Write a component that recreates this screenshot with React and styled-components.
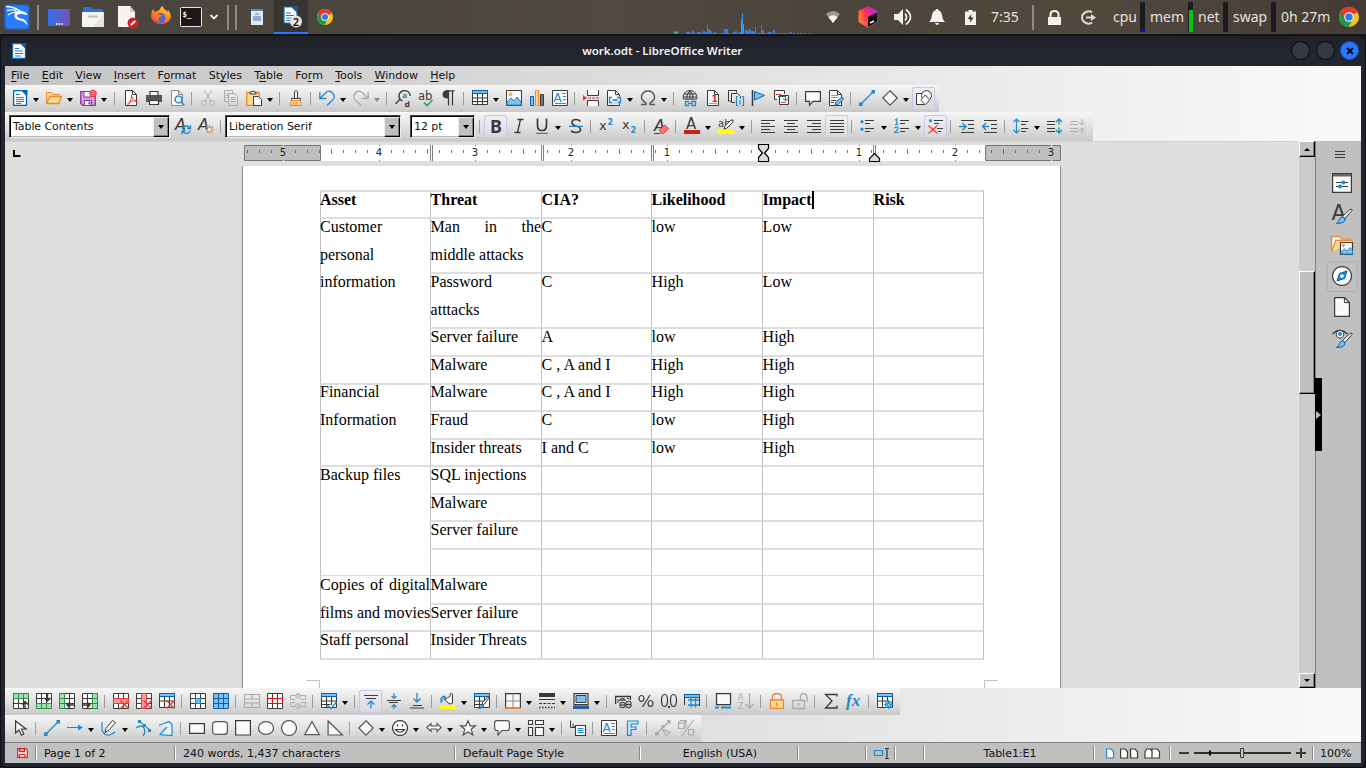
import React from "react";
import styled, { createGlobalStyle } from "styled-components";

const Global = createGlobalStyle`
  * { box-sizing: border-box; }
  body { margin: 0; background: #15171d; overflow: hidden; }
  svg { display: block; flex: none; overflow: visible; }
`;

/* ---------- palette ---------- */
const K = "#3a3a38";
const B = "#1e8bcd";
const DB = "#0063b1";
const LB = "#83beec";
const R = "#ed3d3b";
const O = "#ed8733";
const Y = "#f8db8f";
const G = "#309048";
const LG = "#a1dfb3";
const X = "#acacac";
const W = "#fafafa";
const SANS = '"DejaVu Sans", sans-serif';

/* ---------- icon data: [path, stroke, fill, width, dash] or {t,...} for letters ---------- */
const grid = (c, f) => ["M.5 .5h15v15h-15zM.5 5.5h15M.5 10.5h15M5.5 .5v15M10.5 .5v15", c, f];
const redX = ["M7.5 7.5l8 8M15.5 7.5l-8 8", R, "none", 1.5];
const tableTop = [["M.5 .5h15v14h-15z", K, W], ["M0 0h16v4h-16z", "none", DB], ["M1 1h14v2h-14z", "none", LB]];

const ICONS = {
  newDoc: [["M1.6 .6h8.400l4.500 4.500v10.300H1.600z", DB, W, 1.300], ["M10 0h5.500v5.500z", "none", DB], ["M4 4.500h4M4 7.500h8M4 9.500h8M4 11.500h8M4 13.500h5", B]],
  open: [["M.6 13.500V2.500h5l1.500 2h6v3", O, Y], ["M.8 13.500l3-7h11.700l-2.500 7z", O, Y, 1.300]],
  save: [["M.7 1.700h14.600v13.600h-12.600l-2-2z", "#8e3a96", "#d59bd9", 1.300], ["M4 2v5h7V2M4.500 15v-4.500h7V15", "#8e3a96", W], ["M8.500 11.500h2v3h-2z", "none", "#8e3a96"], ["M13 0a3.300 3.300 0 1 0 .01 0z", "#e33", "#f66"]],
  pdf: [["M2.500 .5h7l4 4v11h-11z", K, W], ["M9.500 .5v4h4", K], ["M8.500 5q1 3-2 8-2 3-2 1 3-4 9-3 2 1 0 1-4-2-5-6", R, "none", 1]],
  print: [["M4 5V1.500h8V5", K, W, 1.200], ["M0 5h16v7h-3v-2H3v2H0z", "none", "#555553"], ["M3.500 10.500h9v4h-9z", K, W, 1.200]],
  preview: [["M2.500 .5h7l4 4v11h-11z", "#8a8a88", W], ["M9.500 .5v4h4", "#8a8a88"], ["M9.500 6a3.500 3.500 0 1 0 .01 0zM12 12l3.500 3.500", B, "#e8f4fd", 1.400]],
  cut: [["M4.500 .5l6.500 11M11.500 .5L5 11.500M4 10.500a2.500 2.500 0 1 0 .01 0zM12 10.500a2.500 2.500 0 1 0 .01 0z", X]],
  copy: [["M9.500 3V.5h-8v11h3M5.500 3.500h6l3 3v9h-9zM7.500 7.500h5M7.500 9.500h5M7.500 11.500h5", X, "none"], ["M3 3.500h2.500M3 5.500h2M3 7.500h2", X]],
  paste: [["M.7 2.500h12.500v12.800H.7z", O, Y, 1.300], ["M4 4V2h2Q7-.5 8 2h2v2z", K, W], ["M7.500 6.500h5l3 3v6h-8z", K, W]],
  brushFmt: [["M6.500 8V1.500q1.500-2 3 0V8", K, W], ["M3.500 8.500h9v2h-9z", K, W], ["M3.500 10.500l-1.500 5h11.500l-1-5z", O, Y], ["M5 15l1-3M8 15l.5-3", O]],
  undo: [["M.8 2v6.500h6.500M.8 8.500L7 2.500q4-3 7 1 3 4-1 7L8 15.500", B, "none", 1.300]],
  redo: [["M15.200 2v6.500H8.700M15.200 8.500L9 2.500q-4-3-7 1-3 4 1 7L8 15.500", X, "none", 1.300]],
  find: [["M9.500 .6a5.500 5.500 0 0 0-4.500 8.700L.5 14M5 9.300q1 1 2.500 1.500M15 6V4.500Q13.500 .6 9.500 .6", K, "none", 1.300], { t: "a", x: 7, y: 8, s: 7.5, c: B, f: SANS, b: 1 }, { t: "d", x: 9.5, y: 16.8, s: 7.5, c: K, f: SANS, b: 1 }],
  spell: [{ t: "ab", x: 0, y: 10, s: 11.5, c: K, f: SANS }, ["M6 12.500l3 3 5.500-5.500", "#27a35a", "none", 1.600]],
  pilcrow: [["M7.500 15.500V.8h6M11.500 .8v14.700", K, "none", 1.300], ["M8 0H6Q1.500 .5 1.500 4.500T7 8.500z", "none", K]],
  table: [...tableTop, ["M.5 8h15M.5 11.500h15M5.500 4v11M10.500 4v11", K]],
  image: [["M.5 .5h15v15H.5z", K, W], ["M1 12l4-4 3 3 3-4 4 5v3H1z", B, LB], ["M4.500 3a1.500 1.500 0 1 0 .01 0z", O, Y]],
  chart: [["M1.500 6.500h3v9h-3z", DB, LB], ["M6.500 .6h3v15h-3z", O, Y], ["M11.500 4.500h3v11h-3z", K, "#777"]],
  textbox: [["M.5 .5h15v15H.5z", K, W], { t: "A", x: 1.5, y: 12, s: 12, c: B, f: SANS }, ["M10 3.500h4M11 6.500h3M11 9.500h3M3 13.500h11", "#777"]],
  pagebreak: [["M4.500 0v5.500h11V0M4.500 16v-5.500h11V16", K, W], ["M5 8h11", R, "none", 1, "3 1"], ["M0 5l4 3-4 3z", "none", R]],
  field: [["M1.500 15.500V.5h8l4 4v2M1.500 15.500h12v-2", K, W], ["M9.500 .6v4h4", K], ["M6 7.500H3.500v5H6M11 7.500h3.500v5H12M6.500 10h5", B, "none", 1.300]],
  omega: [["M1 14.500h5v-1.500Q.8 10 1.500 6 3 1 8 1t6.500 5q.7 4-4.500 7v1.500h5", "#555", "none", 1.400]],
  link: [["M8 .6a6.500 6.500 0 0 0-6.500 8.500h13A6.500 6.500 0 0 0 8 .6zM8 .6v8.500M2 4h12M1.500 7h13M5 9Q4 4 8 .6 12 4 11 9", K], ["M7 11.500H3.500v4H7M9 11.500h4.500v4H9M6 13.500h5", B, "none", 1.300]],
  footnote: [["M2.500 .5h7l4 4v11h-11z", K, W], ["M9.500 .5v4h4", K], { t: "1", x: 6.5, y: 12, s: 9, c: "#e22", f: SANS, b: 1 }, ["M4 13.500h8", "#999"]],
  crossref: [["M3 11H.5V.5h8v2M3.500 3.500h6l3 3v2M3.500 3.500v9H7", K, "none"], ["M10 6.500H8.500v9H10M14 6.500h1.500v9H14M12 10v4.500", B, "none", 1.200], ["M12 7.500v1.200", B]],
  bookmark: [["M1.500 0v16", K, "none", 1.500], ["M3.500 1.500l10 4-10 4.500z", DB, LB]],
  xref: [["M10.500 4V.5h-10v9H3M5.500 5.500h9v9h-9z", K, W], ["M2 4.500h5M7 12.500h5", R], ["M4 6.500h7.500v4M9 8.500l2.500 2.500L14 8.500", "#2b6b45"]],
  comment: [["M.6 1.600h14.800v9.800H8L4.500 15.300v-3.900H.6z", K, W, 1.200]],
  track: [["M1.500 .5h8l4 4v11h-12z", K, W], ["M9.500 .5v4h4", K], ["M3 5.500h7M3 7.500h7", O], ["M3 10.500h5M3 12.500h3", K], ["M7 15l1-3 6-5 1.500 2-6 6z", DB, LB]],
  line: [["M2 14L14 2", B, "none", 1.200], ["M0 12.500h3.500V16H0zM12.500 0H16v3.500h-3.500z", "none", B]],
  diamond: [["M8 .8L15.200 8 8 15.200.8 8z", "#5a5a58", W, 1.300]],
  shapes: [["M8.500 3.500h-8v11h8z", K, W], ["M10.500 .6a5 5 0 1 0 .01 0z", K, W], ["M9 5L14 10l-5 5-4-5z", "#777", W, 1.100]],
  aRefresh: [{ t: "A", x: 0, y: 12, s: 16, c: K, f: SANS, i: 1 }, ["M7.500 11Q8 8 11 8q2.500 0 3.500 2M15.500 7v3.500h-3.500M15.500 12.500Q14 15.500 11.500 15.500T8 13.500M7 16.500V13h3.500", B, "none", 1.300]],
  aNew: [{ t: "A", x: 0, y: 12, s: 16, c: K, f: SANS, i: 1 }, ["M11.500 7v9M7 11.500h9M8.300 8.300l6.400 6.400M14.700 8.300l-6.400 6.400", O, "none", 1.200], ["M11.500 9.500a2 2 0 1 0 .01 0z", O, "#fff"]],
  bold: [{ t: "B", x: 2, y: 15, s: 18, c: K, f: '"Noto Sans", sans-serif', b: 1 }],
  italic: [["M6.500 1.500h6M3.500 14.500h6M9.500 1.500l-3 13", K, "none", 1.300]],
  underline: [["M3.500 .5v7q0 5 4.500 5t4.500-5v-7", K, "none", 1.700], ["M2 15.400h12", B, "none", 1.200]],
  strike: [["M12.500 3.500Q11 1.500 8 1.500 4 1.500 4 4.500q0 2.500 4 3.500 4.500 1 4.500 3.500 0 3-4.500 3-3 0-5-1.500", K, "none", 1.600], ["M1 8.300h14", B, "none", 1.300]],
  sup: [{ t: "x", x: 0, y: 12, s: 13, c: K, f: SANS }, { t: "2", x: 8.5, y: 7, s: 8, c: B, f: SANS, b: 1 }],
  sub: [{ t: "x", x: 0, y: 11, s: 13, c: K, f: SANS }, { t: "2", x: 8.5, y: 15, s: 8, c: B, f: SANS, b: 1 }],
  erase: [{ t: "A", x: 1, y: 13, s: 16, c: K, f: SANS, i: 1 }, ["M6.500 12l5-5 4 3.500-5 5h-2z", "#d33", "#f77"], ["M1 15.500h6", K]],
  fontColor: [{ t: "A", x: 2, y: 11, s: 15, c: K, f: SANS, b: 0 }, ["M0 12h16v4H0z", "none", "#c9211e"]],
  highlight: [{ t: "ab", x: 0, y: 9, s: 10, c: K, f: SANS }, ["M7 8l6-6q3-1 2 2l-6 6-3 1z", K, W], ["M0 12h16v4H0z", "none", "#ffff00"]],
  alignL: [["M1 2.500h14M1 5.500h9M1 8.500h14M1 11.500h9M1 14.500h14", K]],
  alignC: [["M1 2.500h14M4 5.500h8M1 8.500h14M4 11.500h8M1 14.500h14", K]],
  alignR: [["M1 2.500h14M6 5.500h9M1 8.500h14M6 11.500h9M1 14.500h14", K]],
  alignJ: [["M1 2.500h14M1 5.500h14M1 8.500h14M1 11.500h14M1 14.500h14", K]],
  bullets: [["M2 2.500a1.200 1.200 0 1 0 .01 0zM2 10a1.200 1.200 0 1 0 .01 0z", B, B], ["M5 2.500h9M5 5.500h5M5 10.500h9M5 13.500h5", K]],
  numbers: [["M1 2.200L2.800 1v5.500M1 6.500h3.600M.8 10Q2.500 8 4 9.800 4.500 11 .8 14.500h4", B, "none", 1.200], ["M6 2.500h9M6 5.500h5M6 10.500h9M6 13.500h5", K]],
  noList: [["M2.500 1.500a1.200 1.200 0 1 0 .01 0z", B, B], ["M6 2.500h9M6 5.500h5M9 10.500h6M10 13.500h3", K], ["M.5 7.500l9 8M9.500 7.500l-9 8", R, "none", 1.300]],
  indent: [["M2 2.500h13M9 6.500h6M9 10.500h6M2 14.500h13", K], ["M0 8.500h6.500M3.500 5l3.500 3.500L3.500 12", B, "none", 1.300]],
  outdent: [["M2 2.500h13M9 6.500h6M9 10.500h6M2 14.500h13", K], ["M7 8.500H.8M4 5L.5 8.500 4 12", B, "none", 1.300]],
  spacing: [["M8 3.500h7.500M8 6.500h5M8 10.500h7.500M8 13.500h5", K], ["M3.500 1v14M.5 4l3-3 3 3M.5 12l3 3 3-3", B, "none", 1.200]],
  paraInc: [["M0 3.500h8M0 6.500h8M0 10.500h8M0 13.500h8", K], ["M12 1v5.500M9 4l3-3 3 3M12 9.500v5.500M9 12l3 3 3-3", B, "none", 1.300]],
  paraDec: [["M0 3.500h8M0 6.500h8M0 10.500h8M0 13.500h8M12 1v5.500M9 4l3 3 3-3M12 15.500V10M9 13l3-3 3 3", X]],
  rowAbove: [grid(K, W), ["M.5 .5h15v5H.5zM5.500 .5v5M10.500 .5v5", G, LG], ["M12 16V8.500M9 11.500l3-3 3 3", K, "none", 1.400]],
  rowBelow: [grid(K, W), ["M.5 10.500h15v5H.5zM5.500 10.500v5M10.500 10.500v5", G, LG], ["M11.500 0v8M8.500 5l3 3 3-3", K, "none", 1.400]],
  colLeft: [grid(K, W), ["M.5 .5h5v15h-5zM.5 5.500h5M.5 10.500h5", G, LG], ["M16 12H8M11 9l-3 3 3 3", K, "none", 1.400]],
  colRight: [grid(K, W), ["M10.500 .5h5v15h-5zM10.500 5.500h5M10.500 10.500h5", G, LG], ["M0 12h8M5 9l3 3-3 3", K, "none", 1.400]],
  delRow: [grid(K, W), ["M.5 5.500h15v5H.5z", R, "#f99"], redX],
  delCol: [grid(K, W), ["M5.500 .5h5v15h-5z", R, "#f99"], redX],
  delTable: [...tableTop, ["M.5 8h15M5.500 4v10M10.500 4v10", K], redX],
  selCell: [grid(K, W), ["M5.500 5.500h5v5h-5z", B, "#6db8ea"]],
  selTable: [grid(DB, LB)],
  merge: [["M.5 1.500h15v13H.5zM.5 6h15M.5 10h15M8 1.500V6M8 10v4.500", X, "none", 1.200]],
  split: [["M.5 .5h15v15H.5zM5.500 .5v15M10.500 .5v15", K, W], ["M.5 5.500h15v5H.5zM5.500 5.500v5M10.500 5.500v5", "#d11", W, 1.200]],
  splitTable: [["M6 5.500V2.500H.5v4H5M10 5.500V2.500h5.500v4H11M6 10.500v3H.5v-4H5M10 10.500v3h5.500v-4H11M8 0v6M6 2l2-2 2 2M8 16v-6M6 14l2 2 2-2", X]],
  autofmt: [...tableTop, ["M.5 8h15M.5 11.500h9M5.500 4v11M10.500 4v8", K], ["M6 12l4 3.500L15.500 9", B, "none", 1.400]],
  vTop: [["M1 2.500h14M3 5.500h10", K], ["M8 15.500V8M4.500 11.500L8 8l3.500 3.500", B, "none", 1.300]],
  vMid: [["M1 7.500h14M3 9.500h9", K], ["M8 0v5.500M5.500 3L8 5.500 10.500 3M8 16v-4.500M5.500 14L8 11.500l2.500 2.500", B, "none", 1.200]],
  vBot: [["M4 12.500h9M1 15h14", K], ["M8 0v9M4.500 5.500L8 9l3.500-3.500", B, "none", 1.300]],
  cellBg: [["M1 10V5q2-2 4-2v4", DB, LB], ["M8 10L5 6l5-2.500V1q1.500-1.500 2.500 0v9L10 11z", K, W], ["M0 12h16v4H0z", "none", "#ffff00"]],
  tblStyle: [...tableTop, ["M.5 8h9M.5 11.500h8M5.500 4v11M10.500 4v4", K], ["M15.500 4l-5 7-2 1 0-2.500 5-5.500q2-1 2 0z", K, W], ["M8 11l2 1q-1 3.500-5 3.500 2-1.500 3-4.500z", DB, LB]],
  borders: [["M.6 .6h14.800v14.400H.6z", K, W, 1.200], ["M8 1v14M1 8h14", "#888"], ["M0 15.200h16", O, "none", 1.600]],
  lineStyle: [["M0 2h16", K, "none", 4], ["M0 6.500h16", K, "none", 1], ["M0 10.500h16", K, "none", 1, "3 1.300"], ["M0 14.500h16", K, "none", 1.300, "1.500 1.500"]],
  borderCol: [["M1 .6h14v11H1z", K, W, 1.200], ["M3 2.500h10v7H3z", K, "#83beec"], ["M0 12.500h16V16H0z", "none", "#2a6099"]],
  currency: [["M.6 11V3.500h14.800V7", K, "none", 1.300], ["M3 6v4M12 5.500h2M4.500 8a3 2.500 0 0 1 6 0", K, "#777"], ["M5 10q2.500-2 5 0v4q-2.500 2-5 0zM11 9q2.500-2 5 0v5q-2.500 2-5 0z", K, "#bbb"], ["M5 12h5M11 11.500h5", K]],
  percent: [["M3.500 2.500a2.500 3 0 1 0 .01 0zM12.500 7.500a2.500 3 0 1 0 .01 0zM12 2L4.500 14", K, "none", 1.200]],
  decimal: [["M3.500 1.500q3 0 3 6t-3 6-3-6 3-6zM12.500 1.500q3 0 3 6t-3 6-3-6 3-6z", K, "none", 1.200], ["M7 13h2v2H7z", "none", K]],
  numFmt: [["M0 1h16v4H0z", "none", DB], ["M1 2h14v2H1z", "none", LB], ["M.5 5v7M15.500 5v8", K, W], ["M7 3.500v11M11.500 3.500v11M4 7h11M4 12h11", B, "none", 1.300]],
  caption: [["M1.500 .6h14v11h-14z", K, W, 1.300], ["M0 14.500h4M6 14.500h10", B, "none", 1.800]],
  sort: [{ t: "A", x: 0, y: 7, s: 8, c: X, f: SANS }, { t: "Z", x: 0, y: 16, s: 8, c: X, f: SANS }, ["M11.500 0v15M7.500 11l4 4 4-4", X, "none", 1.300]],
  lock: [["M3.500 7V4q0-3.500 4.500-3.500T12.500 4v3", O, "none", 1.400], ["M1.500 7h13v8.400h-13z", O, Y, 1.300], ["M8 9.500v4", O, "none", 1.500]],
  unlock: [["M8.500 7V4q0-3.500 3-3.500t3.500 3.500v5M.6 7.500h11.800v8H.6zM6.500 10v3", X, "none", 1.300]],
  sum: [["M14 3.500V1.500H2.500L9 8l-6.500 7H14v-2.500", K, "none", 1.300]],
  fx: [{ t: "fx", x: 0, y: 12.5, s: 17, c: B, f: '"Liberation Serif", serif', i: 1, b: 1 }],
  tblProps: [...tableTop, ["M.5 8h9M5.500 4v11M10.500 4v4", K], ["M11.500 8.500a3 3 0 1 0 .01 0z", B, W, 1.300], ["M11.500 7v9M7 11.500h9M8.300 8.300l6.400 6.400M14.700 8.300l-6.400 6.400", B], ["M11.500 10.500a1.200 1.200 0 1 0 .01 0z", B, "#fff"]],
  pointer: [["M2.600 1v12l3.400-3 2.500 5.200 2.300-1.200L8.500 9H13z", K, W, 1.200]],
  lineArrow: [["M0 7.500h12", B, "none", 1.200], ["M11 4.500l5 3-5 3z", "none", B]],
  curve: [["M1 2v3.500q0 2.500 0 4T4 14.500q3 1.500 6 0t4-2.500", B, "none", 1.200], ["M11.500 .5l3 2-7 8-3.500 2 1-4z", K, W]],
  connector: [["M1 8q6-4 8 0t-1 8", B, "none", 1.300], ["M4 1l12 10", K], ["M3 0h3v3H3zM8 4h3v3H8zM13 9h3v3h-3z", "none", B]],
  polygon: [["M1 5.500l10-4 3 3v11l-12-1 7-7.500", B, "#e7f1fa", 1.200]],
  rect: [["M.6 3.600h14.800v9.800H.6z", K, W, 1.200]],
  rrect: [["M3.600 1.600h8.800q3 0 3 3v6.800q0 3-3 3H3.600q-3 0-3-3V4.600q0-3 3-3z", "#555", W, 1.200]],
  square: [["M.6 .6h14.800v14.400H.6z", K, W, 1.200]],
  ellipse: [["M8 1.600c10 0 10 12.800 0 12.800s-10-12.800 0-12.800z", "#555", W, 1.200]],
  circle: [["M8 .6a7.400 7.400 0 1 0 .01 0z", "#555", W, 1.200]],
  tri: [["M8 1.500l7.300 13.200H.7z", "#555", W, 1.200]],
  rtri: [["M1.100 1v14h14.300z", "#555", W, 1.200]],
  smiley: [["M8 .6a7.400 7.400 0 1 0 .01 0z", K, W, 1.200], ["M5.500 4.500v2M10.500 4.500v2M3.500 9.500q4.500 5.500 9 0z", K, "none", 1.200]],
  dblArrow: [["M.8 7.500L5 3.500V6h6V3.500l4.200 4-4.200 4V9H5v2.500z", "#555", W, 1.100]],
  star: [["M8 .8l2.100 5h5.300l-4.200 3.400 1.600 5.800L8 11.700 3.200 15l1.600-5.800L.6 5.800h5.300z", "#555", W, 1.200]],
  callout: [["M3 .6h10q2.400 0 2.400 2.400v5q0 2.500-2.400 2.500H8L4 15v-4.500H3Q.6 10.500 .6 8V3Q.6 .6 3 .6z", "#555", W, 1.200]],
  flow: [["M.5 .5h4v4h-4zM7.500 .5h8v4h-8zM.5 7.500h4v8h-4zM7.500 7.500h8v8h-8z", K, W, 1.100]],
  insText: [["M.5 .5v7h4.500M3 3.500v3.500h2", K], ["M5.500 5.500h10v10h-10z", K, W, 1.100], ["M7.500 8.500h6M7.500 10.500h6M7.500 12.500h6", B]],
  fontwork: [["M3.500 15.300V1h10.500v3H7v3h5v2.500H7v5.800z", B, "#cfe7f8", 1.200]],
  points: [["M2 13.500L8 7l6-5M7 9l8 3.500-4 3z", X, "none", 1.200], ["M0 12h4v3.500H0zM12 0h3.500v3.500H12zM6.500 5h3v3h-3z", "none", X]],
  extrude: [["M.6 3h5.500v5.500H.6zM.6 3l2-2.400h5.500v5.400l-2 2.500M6 3l2-2.400M15.500 0L4 15.500M10.500 9.500h5v5.500h-5z", X, "none", 1.200]],
  // sidebar, drawn on a 20 unit box
  sbProps: [["M.6 .6h18.800v18.800H.6z", K, W, 1.200], ["M1 1h18v2.500H1z", "none", "#666664"], ["M4 9.500h12M4 13.500h12", K, "none", 1.100], ["M11.500 7.500a2 2 0 1 0 .01 0zM8 11.500a2 2 0 1 0 .01 0z", "none", B]],
  sbStyles: [{ t: "A", x: -.5, y: 16, s: 21, c: K, f: SANS }, ["M20 6.500l-7 8-2.500-2 7.500-7q3-1 2 1z", K, W], ["M10.500 13q3 1 2.500 3-1.500 4-8.500 3.300 3-1 3-4 1-2 3-2.300z", DB, LB]],
  sbGallery: [["M-.4 16V1.600h8l2 2.500h8v3", O, W, 1.300], ["M-.4 17.400l4-12h17.500", O, Y, 1.300], ["M8.500 7.500h12v12h-12z", K, W, 1.200], ["M9 17l3.500-3 2.500 2 3-3.500 2.500 3v3.500H9z", B, LB], ["M11.500 9.500a1 1 0 1 0 .01 0z", O, O]],
  sbNav: [["M10 .6a9.400 9.400 0 1 0 .01 0z", K, W, 1.200], ["M15 5l-2.500 7.500L5 15l2.500-7.500z", DB, B], ["M10 8.200a1.800 1.800 0 1 0 .01 0z", "none", "#fff"]],
  sbPage: [["M2.600 .6h9.800l5 5v13.800H2.600z", K, W, 1.200], ["M12.400 .6v5h5", K]],
  sbInspect: [["M.5 6q7-7 15 0", K, "none", 1.200], ["M8 2.500a3.800 3.800 0 1 0 .01 0z", K, W], ["M8 4a2 2 0 1 0 .01 0z", "none", B], ["M20 6.500l-7 8-2.500-2 7.500-7q3-1 2 1z", K, W], ["M10.500 13q3 1 2.500 3-1.500 4-8.500 3.300 3-1 3-4 1-2 3-2.300z", DB, LB]],
};

const Icon = ({ name, size = 16, box = 16 }) => (
  <svg width={size} height={size} viewBox={`0 0 ${box} ${box}`}>
    {ICONS[name].map((p, i) =>
      Array.isArray(p) ? (
        <path key={i} d={p[0]} stroke={p[1]} fill={p[2] || "none"} strokeWidth={p[3] || 1} strokeDasharray={p[4]} />
      ) : (
        <text key={i} x={p.x} y={p.y} fontSize={p.s} fill={p.c} fontFamily={p.f} fontWeight={p.b ? 700 : 400} fontStyle={p.i ? "italic" : "normal"}>{p.t}</text>
      )
    )}
  </svg>
);

/* ---------- desktop panel ---------- */
const Screen = styled.div`
  width: 1366px; height: 768px; display: flex; flex-direction: column; background: #15171d;
`;
const Panel = styled.div`
  height: 34px; flex: none; display: flex; color: #e4e2de;
  font: 14px "Noto Sans", sans-serif;
  background: linear-gradient(90deg, #49443f 0, #4b463d 25%, #504a42 45%, #4a443a 60%, #51493e 80%, #453b36 100%);
`;
const Slot = styled.div`
  width: ${(p) => p.$w}px; height: 34px; flex: none; display: flex; align-items: center; justify-content: center;
  background: ${(p) => (p.$on ? "#38342f" : "transparent")};
  border-bottom: ${(p) => (p.$on ? "2px solid #2777ff" : "none")};
`;
const PanelText = styled(Slot)`
  justify-content: flex-start; padding-left: 5px; white-space: nowrap; line-height: 34px;
`;
const PanelRule = styled.i`width: 2px; height: 25px; background: #8e8a86;`;
const Filler = styled.div`flex: 1;`;
const Meter = styled.div`
  width: 5px; height: 30px; margin-top: 2px; flex: none; border-radius: 1px; background: #191b21;
  display: flex; align-items: flex-end; padding: 0 .5px .5px;
  &::after { content: ""; width: 100%; height: ${(p) => p.$h}px; background: ${(p) => p.$c}; }
`;

const Chrome = ({ r }) => (
  <svg width={r * 2} height={r * 2} viewBox="0 0 20 20">
    <circle cx="10" cy="10" r="10" fill="#fbc116" />
    <path d="M10 10L1.300 5A10 10 0 0 1 18.700 5z" fill="#e33b2e" />
    <path d="M10 10L1.300 5A10 10 0 0 0 9.500 20L14 12z" fill="#229a4c" />
    <path d="M10 5.400h9A10 10 0 0 0 1.300 5l4.500 7z" fill="#e33b2e" />
    <circle cx="10" cy="10" r="4.800" fill="#fff" /><circle cx="10" cy="10" r="3.800" fill="#2e7bea" />
  </svg>
);
const BARS = [[686, 2], [688, 2], [690, 1], [692, 3], [695, 1], [697, 2], [699, 2], [701, 1], [703, 3], [705, 2], [707, 9], [708, 5], [710, 3], [712, 1], [714, 2], [717, 1], [720, 1], [722, 1], [724, 5], [726, 5], [728, 1], [731, 1], [733, 2], [735, 3], [737, 1], [739, 2], [741, 15], [742, 21], [743, 10], [745, 4], [747, 3], [749, 5], [750, 3], [752, 3], [754, 2], [755, 7], [757, 1], [759, 1], [761, 9], [762, 4], [764, 1], [766, 1], [768, 2], [770, 2], [773, 4], [775, 1], [778, 1], [781, 1], [784, 1], [787, 1], [790, 2], [793, 1], [797, 1], [800, 1], [804, 1], [809, 1]];

const DesktopPanel = () => (
  <Panel>
    <Slot $w={34}>
      <svg width="26" height="26" viewBox="0 0 26 26">
        <rect x="1" y="1" width="24" height="24" rx="3" fill="#2a7cff" stroke="#2361c9" strokeWidth="1.500" />
        <path d="M2 2.500q7 0 12 3.500M3 6.500q6-1.500 10 1M4 11q4-3 8-2.500" fill="none" stroke="#fff" strokeWidth="1.300" />
        <path d="M9 4q6 1 8 3l3 .5 3.500 2.500-.5 1-5-1q-5-.5-5 1.500 0 2 4 3 6 1 6.500 7.500-2.500-5-7.500-5.500-5.500-1-5.500-5 0-3 4-4.500z" fill="#fff" />
      </svg>
    </Slot>
    <Slot $w={8}><PanelRule /></Slot>
    <Slot $w={34}>
      <svg width="22" height="17" viewBox="0 0 22 17">
        <defs><linearGradient id="dk"><stop stopColor="#3273e6" /><stop offset="1" stopColor="#7452b1" /></linearGradient></defs>
        <rect width="22" height="17" rx="1" fill="url(#dk)" /><path d="M8 15h1.500M10.500 15H12M13 15h1.500" stroke="#fff" strokeWidth="1.500" />
      </svg>
    </Slot>
    <Slot $w={34}>
      <svg width="22" height="20" viewBox="0 0 22 20">
        <path d="M1 1q0-1 1-1h7l2 2h9q1 0 1 1v4H1z" fill="#2c70dc" /><rect y="5" width="22" height="15" rx="1" fill="#f4f4f4" />
        <path d="M22 7v13H11z" fill="#e4e4e4" /><path d="M7 9.500h8" stroke="#bbb" strokeWidth="2" strokeLinecap="round" />
      </svg>
    </Slot>
    <Slot $w={34}>
      <svg width="22" height="22" viewBox="0 0 22 22">
        <path d="M2 0h12l5 6v15H2z" fill="#f5f5f5" /><path d="M14 0v6h5z" fill="#ccc" />
        <circle cx="17" cy="17" r="5.500" fill="#cf2027" /><path d="M14.800 19l4.500-4" stroke="#fff" strokeWidth="1.800" />
      </svg>
    </Slot>
    <Slot $w={34}>
      <svg width="22" height="22" viewBox="0 0 22 22">
        <defs><linearGradient id="ff" x1=".8" y1="0" x2=".3" y2="1"><stop stopColor="#ffdf3c" /><stop offset=".5" stopColor="#ff8a1e" /><stop offset="1" stopColor="#f3364b" /></linearGradient></defs>
        <path d="M1 11Q1 6 3 3l2 3 3-1.500q0 0 1 .5 1-4 4-5 0 3 3 4l1 2 1-2q3 3 3 7a10.500 10.500 0 0 1-20 0z" fill="url(#ff)" />
        <circle cx="10.500" cy="12" r="5" fill="#4d65d2" /><path d="M4 8q3-1 5 .5l3 1q-1 2-3 2-2 2 1 4-5 0-6-7.500z" fill="#ff7a1c" />
      </svg>
    </Slot>
    <Slot $w={26}>
      <svg width="22" height="20" viewBox="0 0 22 20">
        <rect x=".5" y=".5" width="21" height="19" rx="1" fill="#1a1a1a" stroke="#e8e8e8" />
        <text x="2.500" y="9.500" fontSize="7.500" fontWeight="700" fill="#fff" fontFamily='"DejaVu Sans Mono", monospace'>$_</text>
      </svg>
    </Slot>
    <Slot $w={20}><svg width="8" height="6" viewBox="0 0 8 6"><path d="M.5 1L4 4.500 7.500 1" fill="none" stroke="#eee" strokeWidth="1.800" /></svg></Slot>
    <Slot $w={8}><PanelRule /></Slot>
    <Slot $w={8}><PanelRule /></Slot>
    <Slot $w={34}>
      <svg width="12" height="16" viewBox="0 0 12 16"><path d="M0 0h12v16H0z" fill="#e6e9eb" /><path d="M0 0h12v2H0z" fill="#4a90c4" /><path d="M2 7h8v5H2z" fill="#8caed0" /><path d="M4 4h4v2H4z" fill="#a8b8c4" /></svg>
    </Slot>
    <Slot $w={34} $on>
      <svg width="20" height="20" viewBox="0 0 20 20">
        <path d="M3 1h8l5 5v11H3z" fill="#fff" stroke="#0e6fb5" strokeWidth="1.200" /><path d="M11 0h6v6z" fill="#0b5c96" /><path d="M5 7h5M5 9.500h8M5 12h8M5 14.500h5" stroke="#2a7fb8" strokeWidth="1.200" />
        <circle cx="15" cy="15.500" r="6" fill="#e8e6e3" /><text x="15" y="19.500" fontSize="11" fontWeight="600" textAnchor="middle" fill="#111" fontFamily='"Noto Sans", sans-serif'>2</text>
      </svg>
    </Slot>
    <Slot $w={34}><Chrome r={8} /></Slot>
    <Filler />
    <Slot $w={144}>
      <svg width="144" height="34" viewBox="672 0 144 34">
        <path d="M674 32.500h4" stroke="#25c7a0" strokeWidth="2" />
        {BARS.map(([x, h]) => <rect key={x} x={x} y={34 - h} width={h > 5 ? 1 : 2} height={h} fill={h > 9 ? "#2b9af0" : "#2b7ff0"} />)}
      </svg>
    </Slot>
    <Slot $w={34}><svg width="14" height="12" viewBox="0 0 14 12"><path d="M0 3q7-6 14 0L7 12z" fill="#9b9792" /><path d="M2.300 6q4.700-3.500 9.400 0L7 12z" fill="#f3f1ee" /></svg></Slot>
    <Slot $w={36}>
      <svg width="20" height="22" viewBox="0 0 20 22">
        <defs><linearGradient id="jb" x1="0" y1=".6" x2="1" y2=".2"><stop stopColor="#ff8a1f" /><stop offset=".45" stopColor="#fb2a6d" /><stop offset="1" stopColor="#a12bf0" /></linearGradient></defs>
        <path d="M10 0l9.500 5v11L10 22 .5 16V5z" fill="url(#jb)" /><path d="M10 11l9-4.500v9L10 21z" fill="#0a0a0a" /><path d="M12 17l4-2" stroke="#fff" strokeWidth="1.500" />
      </svg>
    </Slot>
    <Slot $w={33}><svg width="18" height="18" viewBox="0 0 18 18"><path d="M0 6h4l5-5v16l-5-5H0z" fill="#f3f1ee" /><path d="M11 5.500q3 3.500 0 7M12 1.500q9 7.500 0 15" fill="none" stroke="#f3f1ee" strokeWidth="1.700" /></svg></Slot>
    <Slot $w={36}><svg width="16" height="16" viewBox="0 0 16 16"><path d="M0 13q2.500-2 3-7Q4 1 8 1t5 5q.5 5 3 7zM6 14h4q-.5 2-2 2t-2-2zM7 0h2v2H7z" fill="#f3f1ee" /></svg></Slot>
    <Slot $w={31}><svg width="11" height="15" viewBox="0 0 11 15"><path d="M3.500 0h4v1.500H11V15H0V1.500h3.500z" fill="#f3f1ee" /><path d="M6.500 4L2.500 9H5v3.500L8.700 7.500H6z" fill="#403c37" /></svg></Slot>
    <PanelText $w={40}>7:35</PanelText>
    <Slot $w={14}><PanelRule /></Slot>
    <Slot $w={28}><svg width="13" height="15" viewBox="0 0 13 15"><path d="M0 7h13v8H0z" fill="#f3f1ee" /><path d="M2.500 8V4.500q0-3.500 4-3.500t4 3.500V8" fill="none" stroke="#f3f1ee" strokeWidth="2" /></svg></Slot>
    <Slot $w={40}><svg width="15" height="15" viewBox="0 0 15 15"><path d="M11 2.500Q8.500 .5 5 2 1 4 1 7.500T5 13q3.500 1.500 6-.5M5 7.500h6" fill="none" stroke="#dedbd7" strokeWidth="2" /><path d="M10 4l5 3.500L10 11z" fill="#dedbd7" /></svg></Slot>
    <PanelText $w={32}>cpu</PanelText><Meter $h={2} $c="#0c0ce0" />
    <PanelText $w={43}>mem</PanelText><Meter $h={22} $c="#00c813" />
    <PanelText $w={30}>net</PanelText><Meter $h={0} $c="#000" />
    <PanelText $w={43}>swap</PanelText><Meter $h={0} $c="#000" />
    <PanelText $w={57}>0h 27m</PanelText>
    <Slot $w={31}><Chrome r={10} /></Slot>
    <Slot $w={2} />
  </Panel>
);

/* ---------- window ---------- */
const Window = styled.div`
  flex: 1; min-height: 0; display: flex; flex-direction: column; margin-top: 1px;
  border-radius: 7px; border: 1px solid #0d0f13; background: #22252e; overflow: hidden;
`;
const TitleBar = styled.div`
  height: 30px; flex: none; display: flex; align-items: center; padding: 0 6px 1px 11px;
  background: linear-gradient(#1e2128, #23262f 60%);
  color: #f2f2f2; font: 600 11.5px "Noto Sans", sans-serif;
`;
const Title = styled.div`flex: 1; text-align: center; padding-left: 13px;`;
const WinButton = styled.div`
  width: 19px; height: 19px; border-radius: 50%; margin-left: 5.5px; flex: none;
  background: ${(p) => (p.$close ? "#2777ff" : "#343844")}; border: 1.3px solid ${(p) => (p.$close ? "#1c55b8" : "#08090c")};
  display: flex; align-items: center; justify-content: center;
`;
const Client = styled.div`
  flex: 1; min-height: 0; margin: 0 4px 4px; display: flex; flex-direction: column; background: #dfdfde;
  font: 11px ${SANS}; color: #111;
`;
const barSweep = "linear-gradient(90deg, #c4c4c4 0, #fafafa 100%)";
const MenuBar = styled.div`
  height: 19px; flex: none; display: flex; align-items: center; padding-left: 6px; background: ${barSweep};
`;
const MenuItem = styled.div`margin-right: 12.3px; white-space: nowrap;`;
const MenuKey = styled.u`text-underline-offset: 2px;`;
const BarRow = styled.div`height: ${(p) => p.$h}px; flex: none; display: flex; background: ${barSweep};`;
const Toolbar = styled.div`
  width: ${(p) => p.$w}px; display: flex; align-items: center; padding-left: ${(p) => p.$pad}px;
  background: linear-gradient(#f6f6f6, #e4e4e4 45%, #c9c9c9);
`;
const Cell = styled.div`
  width: ${(p) => (p.$drop ? 34 : 23)}px; height: 23px; flex: none; display: flex; align-items: flex-start; padding: 2px 0 0 3px;
  border: 1px solid transparent;
  ${(p) => p.$on && "border-color: #c9c8e6; background: rgba(235,235,245,.35); border-radius: 2px;"}
`;
const Caret = styled.i`
  width: 0; height: 0; margin: 8px 0 0 5px; border: 3.5px solid transparent; border-bottom: 0;
  border-top: 4px solid ${(p) => (p.$dim ? "#8a8a8a" : "#000")};
`;
const Sep = styled.i`
  width: ${(p) => p.$w || 8}px; height: 13px; flex: none; display: flex; justify-content: center; padding-right: 1px;
  &::after { content: ""; width: 1px; background: #9c9c9c; }
`;
const Combo = styled.div`
  width: ${(p) => p.$w}px; height: 23px; margin: 0 ${(p) => p.$mr}px 0 0; flex: none; display: flex; align-items: center; padding-left: 3px;
  background: #fff; border: 1px solid; border-color: #4a4a4a #e8e8e8 #e8e8e8 #4a4a4a; box-shadow: inset 1px 1px #000, inset -1px -1px #b8b8b8;
  letter-spacing: -.08px;
  span { flex: 1; white-space: nowrap; }
`;
const ComboBtn = styled.div`
  width: 16px; height: 20px; background: #c0c0c0; border: 1px solid; border-color: #eee #000 #000 #eee;
  box-shadow: inset -1px -1px #808080; display: flex; align-items: center; justify-content: center;
  &::after { content: ""; border: 3px solid transparent; border-top: 4px solid #000; border-bottom: 0; }
`;

/* "name" button, "name+" with a menu arrow, "name!" pressed, "name-" dimmed arrow, "|" separator */
const Tools = ({ list }) =>
  list.split(" ").map((t, i) => {
    if (t === "|") return <Sep key={i} />;
    if (t === "||") return <Sep key={i} $w={9} />;
    const name = t.replace(/[+!-]/g, "");
    const drop = /[+-]/.test(t);
    return (
      <Cell key={i} $drop={drop} $on={t.includes("!")}>
        <Icon name={name} />
        {drop && <Caret $dim={t.includes("-")} />}
      </Cell>
    );
  });

/* ---------- work area ---------- */
const Work = styled.div`height: 547px; flex: none; display: flex; position: relative;`;
const Desk = styled.div`
  flex: 1; display: flex; flex-direction: column; overflow: hidden; border-top: 1px solid #d2d2d2; padding-top: 3px;
`;
const RulerRow = styled.div`display: flex; height: 21px; flex: none; padding-left: 8px;`;
const TabMark = styled.div`width: 231px; flex: none; padding-top: 5px;`;
const Page = styled.div`
  width: 819px; flex: 1; margin-left: 237px; background: #fff; border: solid #8f8f8f; border-width: 0 1px; box-shadow: 0 4px 3px #c4c4c4;
  padding: 24px 0 0 77px; font: 16px "Liberation Serif", serif; color: #000; display: flex; flex-direction: column;
`;
const DocTable = styled.div`
  display: grid; width: 664px; flex: none;
  grid-template-columns: 110px 111px 110px 111px 111px 110px;
  grid-template-rows: 27px 55px 55px 28px 28px 27px 28px 27px 28px 27px 28px 27px 28px 27px 28px;
  border-right: 1px solid #c0c0c0; border-bottom: 2px solid #dedede;
`;
const TCell = styled.div`
  grid-column: ${(p) => p.$c}; grid-row: ${(p) => p.$r} / span ${(p) => p.$s || 1};
  border-left: 1px solid #c0c0c0; border-top: ${(p) => (p.$r === 13 ? "1px solid #dedede" : "2px solid #dedede")};
  padding-top: ${(p) => (p.$r === 13 ? 1 : 0)}px;
  font-weight: ${(p) => (p.$r === 1 ? 700 : 400)};
  display: flex; flex-direction: column; white-space: nowrap;
`;
const Line = styled.div`
  height: 27.5px; line-height: 18px; flex: none;
  margin: ${(p) => (p.$up ? "-2px" : "-1px")} 0 1px ${(p) => (p.$first ? "-1px" : "-.4px")};
  text-align-last: ${(p) => (p.$just ? "justify" : "left")};
`;
const TextCaret = styled.i`display: inline-block; width: 2px; height: 18px; background: #000; vertical-align: top;`;
const Margins = styled.div`
  display: flex; justify-content: space-between; width: 692px; margin: 20px 0 0 -14px; height: 8px;
`;
const Corner = styled.i`
  width: 14px; border-top: 1px solid #c4c4c4;
  ${(p) => (p.$right ? "border-left" : "border-right")}: 1px solid #c4c4c4;
`;

const HEAD = ["Asset", "Threat", "CIA?", "Likelihood", "Impact", "Risk"];
const ASSETS = [
  [2, 4, ["Customer", "personal", "information"]],
  [6, 3, ["Financial", "Information"]],
  [9, 4, ["Backup files"]],
  [13, 2, ["~Copies of digital", "~films and movies"]],
  [15, 1, ["Staff personal"]],
];
const ROWS = [
  [["~Man in the", "middle attacks"], "C", "low", "Low"],
  [["Password", "atttacks"], "C", "High", "Low"],
  ["Server failure", "A", "low", "High"],
  ["Malware", "C , A and I", "High", "High"],
  ["Malware", "C , A and I", "High", "High"],
  ["Fraud", "C", "low", "High"],
  ["Insider threats", "I and C", "low", "High"],
  ["SQL injections"], ["Malware"], ["Server failure"], [""], ["Malware"], ["Server failure"], ["Insider Threats"],
];
const Lines = ({ v, r, first }) =>
  [].concat(v || "").map((l, i) => (
    <Line key={l} $up={r === 6 && i === 0} $first={first} $just={l[0] === "~"}>{l.replace("~", "")}</Line>
  ));

const Ruler = () => {
  const ticks = [];
  for (let k = -43; k <= 24; k++) {
    const x = 763.5 + k * 12;
    const onPage = x > 321 && x < 985;
    if (x < 246 || x > 1058) continue;
    if (k % 8 === 0) {
      if (k) ticks.push(
        <g key={k}>
          <text x={x - .5} y="10.500" textAnchor="middle" fontSize="10" fill="#222" fontFamily={SANS}>{Math.abs(k / 8)}</text>
          <path d={`M${x} 0v1M${x} 15v1`} stroke={onPage ? "#777" : "#fff"} />
        </g>
      );
    } else ticks.push(<path key={k} d={k % 4 === 0 ? `M${x} 4v5` : `M${x} 5v3`} stroke={onPage ? "#777" : "#6c6c6c"} />);
  }
  return (
    <svg width="817" height="16" viewBox="244 0 817 16">
      <path d="M244 0h817v16H244z" fill="#fff" />
      <path d="M244.500 .5h76v15h-76zM985.500 .5h75v15h-75z" fill="#bfbfbf" stroke="#777" />
      {ticks}
      {[430, 541, 651, 873].map((x) => <path key={x} d={`M${x + .5} 0v16M${x + 2.5} 0v16`} stroke="#808080" />)}
      <path d="M758.500 -.5h10v4l-4 4.500 4 4.500v4h-10v-4l4-4.500-4-4.500z" fill="#ddd" stroke="#000" strokeWidth="1.200" />
      <path d="M874.500 8.500l5 5v3h-10v-3z" fill="#ddd" stroke="#000" strokeWidth="1.200" />
    </svg>
  );
};

const Scroll = styled.div`
  width: 17px; flex: none; background: #cbcbcb; border-right: 1px solid #808080; display: flex; flex-direction: column;
`;
const Raised = styled.div`
  height: ${(p) => p.$h}px; flex: none; background: #c0c0c0; border: 1px solid; border-color: #fff #000 #000 #fff; box-shadow: inset -1px -1px #808080;
  display: flex; align-items: center; justify-content: center; margin-top: ${(p) => p.$mt || 0}px;
`;
const SideBar = styled.div`
  width: 45px; flex: none; background: #c0c0c0; display: flex; flex-direction: column; align-items: center; padding: 10px 0 0 7px;
`;
const Deck = styled.div`
  width: 31px; height: 31px; flex: none; padding: 4px; border: 1px solid ${(p) => (p.$on ? "#b0aed0" : "transparent")};
  border-radius: 2px;
`;
const Hamburger = styled.i`
  width: 10px; height: 7px; margin: 0 4px 10px 0; border: solid ${K}; border-width: 1px 0; display: flex; align-items: center;
  &::after { content: ""; width: 10px; height: 1px; background: ${K}; }
`;
const Sash = styled.div`
  position: absolute; right: 39px; top: 237px; width: 7px; height: 73px; background: #000; display: flex; align-items: center; padding-left: 1px;
  &::after { content: ""; border: 4px solid transparent; border-left: 5px solid #bbb; border-right: 0; }
`;

/* ---------- status bar ---------- */
const Status = styled.div`
  flex: 1; display: flex; background: #c0c0c0; border-top: 1px solid #808080; font: 11px ${SANS}; letter-spacing: -.02px;
`;
const Field = styled.div`
  width: ${(p) => p.$w}px; flex: none; display: flex; align-items: center; justify-content: ${(p) => (p.$mid ? "center" : "flex-start")};
  padding-left: ${(p) => p.$pl || 0}px; white-space: nowrap; position: relative;
  &::after { content: ""; position: absolute; right: 0; top: 3px; bottom: 3px; width: 2px; background: linear-gradient(90deg, #888 50%, #fff 50%); }
  &:last-child::after { display: none; }
`;

const App = () => (
  <Screen>
    <Global />
    <DesktopPanel />
    <Window>
      <TitleBar>
        <svg width="14" height="16" viewBox="0 0 14 16"><path d="M.6 .6h9L13.400 5v10.400H.6z" fill="#fff" stroke="#0e6fb5" strokeWidth="1.200" /><path d="M8 0h6v6z" fill="#0b5c96" /><path d="M3 5.500h4M3 8h8M3 10.500h8M3 13h6" stroke="#2a7fb8" strokeWidth="1.200" /></svg>
        <Title>work.odt - LibreOffice Writer</Title>
        <WinButton /><WinButton />
        <WinButton $close><svg width="8" height="8" viewBox="0 0 8 8"><path d="M1 1l6 6M7 1L1 7" stroke="#0b1020" strokeWidth="2" /></svg></WinButton>
      </TitleBar>
      <Client>
        <MenuBar>
          <MenuItem><MenuKey>F</MenuKey>ile</MenuItem>
          <MenuItem><MenuKey>E</MenuKey>dit</MenuItem>
          <MenuItem><MenuKey>V</MenuKey>iew</MenuItem>
          <MenuItem><MenuKey>I</MenuKey>nsert</MenuItem>
          <MenuItem>F<MenuKey>o</MenuKey>rmat</MenuItem>
          <MenuItem>St<MenuKey>y</MenuKey>les</MenuItem>
          <MenuItem>T<MenuKey>a</MenuKey>ble</MenuItem>
          <MenuItem>Fo<MenuKey>r</MenuKey>m</MenuItem>
          <MenuItem><MenuKey>T</MenuKey>ools</MenuItem>
          <MenuItem><MenuKey>W</MenuKey>indow</MenuItem>
          <MenuItem><MenuKey>H</MenuKey>elp</MenuItem>
        </MenuBar>
        <BarRow $h={27}>
          <Toolbar $w={934} $pad={3}>
            <Tools list="newDoc+ open+ save+ || pdf print preview | cut copy paste+ | brushFmt | undo+ redo- | find spell pilcrow | table+ image chart textbox | pagebreak field+ omega+ | link footnote crossref bookmark xref | comment track | line diamond+ shapes!" />
          </Toolbar>
        </BarRow>
        <BarRow $h={29}>
          <Toolbar $w={1088} $pad={4}>
            <Combo $w={161} $mr={1}><span>Table Contents</span><ComboBtn /></Combo>
            <Tools list="aRefresh aNew |" />
            <Combo $w={176} $mr={9}><span>Liberation Serif</span><ComboBtn /></Combo>
            <Combo $w={65} $mr={1}><span>12 pt</span><ComboBtn /></Combo>
            <Tools list="| bold! italic underline+ strike | sup sub | erase | fontColor+ highlight+ | alignL alignC alignR alignJ! | bullets+ numbers+ noList! | indent outdent | spacing+ paraInc paraDec" />
          </Toolbar>
        </BarRow>
        <Work>
          <Desk>
            <RulerRow>
              <TabMark>
                <svg width="8" height="7" viewBox="0 0 8 7"><path d="M1 0v6h6.500" fill="none" stroke="#000" strokeWidth="2" /></svg>
              </TabMark>
              <Ruler />
            </RulerRow>
            <Page>
              <DocTable>
                {HEAD.map((h, i) => <TCell key={h} $c={i + 1} $r={1}><Line $first={i === 0}>{h}{i === 4 && <TextCaret />}</Line></TCell>)}
                {ASSETS.map(([r, s, v]) => <TCell key={r} $c={1} $r={r} $s={s}><Lines v={v} r={r} first /></TCell>)}
                {ROWS.map((row, r) => [0, 1, 2, 3, 4].map((c) => (
                  <TCell key={r + "-" + c} $c={c + 2} $r={r + 2}><Lines v={row[c]} r={r + 2} /></TCell>
                )))}
              </DocTable>
              <Margins><Corner /><Corner $right /></Margins>
            </Page>
          </Desk>
          <Scroll>
            <Raised $h={16}><svg width="6" height="3" viewBox="0 0 6 3"><path d="M0 3l3-3 3 3z" /></svg></Raised>
            <Raised $h={123} $mt={114} />
            <Raised $h={15} $mt={279}><svg width="6" height="3" viewBox="0 0 6 3"><path d="M0 0l3 3 3-3z" /></svg></Raised>
          </Scroll>
          <SideBar>
            <Hamburger />
            {["sbProps", "sbStyles", "sbGallery", "sbNav", "sbPage", "sbInspect"].map((n) => (
              <Deck key={n} $on={n === "sbNav"}><Icon name={n} size={20} box={20} /></Deck>
            ))}
          </SideBar>
          <Sash />
        </Work>
        <BarRow $h={27}>
          <Toolbar $w={895} $pad={4}>
            <Tools list="rowAbove rowBelow colLeft colRight | delRow delCol delTable | selCell selTable | merge split splitTable | autofmt+ | vTop! vMid vBot | cellBg+ tblStyle | borders+ lineStyle+ borderCol+ | currency percent decimal numFmt | caption sort | lock unlock | sum fx | tblProps" />
          </Toolbar>
        </BarRow>
        <BarRow $h={27}>
          <Toolbar $w={696} $pad={4}>
            <Tools list="pointer | line lineArrow+ curve+ connector polygon | rect rrect square ellipse circle tri rtri | diamond+ smiley+ dblArrow+ star+ callout+ flow+ | insText | textbox fontwork | points extrude" />
          </Toolbar>
        </BarRow>
        <Status>
          <Field $w={32} $pl={12}>
            <svg width="11" height="10" viewBox="0 0 11 10"><path d="M.7 .7h8l1.600 1.600v7H.7zM2.500 .7v3h5v-3M2.500 9.500v-3h5.500v3" fill="#fff" stroke="#e01b24" strokeWidth="1.200" /></svg>
          </Field>
          <Field $w={139} $pl={7}>Page 1 of 2</Field>
          <Field $w={280} $pl={7}>240 words, 1,437 characters</Field>
          <Field $w={185} $pl={7}>Default Page Style</Field>
          <Field $w={158} $mid>English (USA)</Field>
          <Field $w={68} />
          <Field $w={29} $pl={6}>
            <svg width="18" height="11" viewBox="0 0 18 11"><path d="M1.500 2.500h8v5h-8z" fill="none" stroke={B} strokeWidth="1.200" /><path d="M12 .5h4M12 10.500h4M14 .5v10" stroke={K} strokeWidth="1.200" /></svg>
          </Field>
          <Field $w={29} />
          <Field $w={170} $mid>Table1:E1</Field>
          <Field $w={76} $pl={11}>
            <svg width="56" height="11" viewBox="0 0 56 11">
              <path d="M.6 1h4.400l2.500 2.500V10H.6z" fill="#fff" stroke={B} strokeWidth="1.200" />
              <path d="M14.600 1H19l2.500 2.500V10h-6.900zM24.600 1H29l2.500 2.500V10h-6.900zM46 3.500V10h-7V3.500L41 1h3.500zM46 3.500V1h5l2.500 2.500V10H46" fill="#fff" stroke={K} strokeWidth="1.200" />
            </svg>
          </Field>
          <Field $w={143} $pl={7}>
            <svg width="130" height="12" viewBox="0 0 130 12">
              <path d="M1 6h10M118 6h10M123 1v10" stroke={K} strokeWidth="2" /><path d="M16 6h97" stroke="#000" strokeWidth="1.300" /><path d="M32 3.500v5" stroke="#000" strokeWidth="2" />
              <path d="M62.600 1.500h3v9h-3z" fill="#ccc" stroke="#333" />
            </svg>
          </Field>
          <Field $w={47} $pl={6}>100%</Field>
        </Status>
      </Client>
    </Window>
  </Screen>
);

export default App;
